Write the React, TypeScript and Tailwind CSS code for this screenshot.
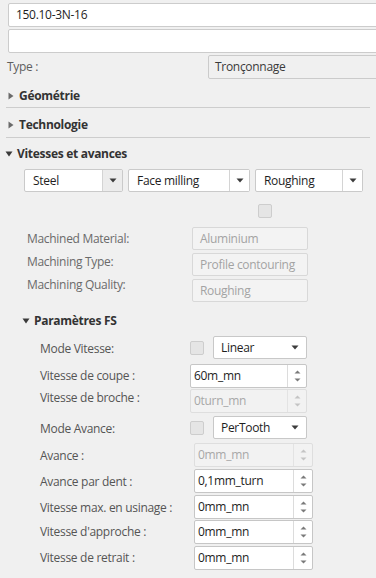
import React from "react";

const Tri = ({ open }: { open?: boolean }) =>
  open ? (
    <svg width="8" height="8" viewBox="0 0 8 8" className="shrink-0">
      <polygon points="0.5,1.5 7.5,1.5 4,6.5" fill="#3a3a3a" />
    </svg>
  ) : (
    <svg width="8" height="8" viewBox="0 0 8 8" className="shrink-0">
      <polygon points="1.5,0.5 6.5,4 1.5,7.5" fill="#6a6a6a" />
    </svg>
  );

const Down = () => (
  <svg width="8" height="5" viewBox="0 0 8 5">
    <polygon points="0.5,0.5 7.5,0.5 4,4.5" fill="#3c3c3c" />
  </svg>
);

const Spin = ({ disabled }: { disabled?: boolean }) => (
  <div className="flex flex-col items-center gap-[4px]">
    <svg width="7" height="4" viewBox="0 0 7 4">
      <polygon points="0.5,3.5 6.5,3.5 3.5,0.5" fill={disabled ? "#c4c4c4" : "#7a7a7a"} />
    </svg>
    <svg width="7" height="4" viewBox="0 0 7 4">
      <polygon points="0.5,0.5 6.5,0.5 3.5,3.5" fill={disabled ? "#c4c4c4" : "#7a7a7a"} />
    </svg>
  </div>
);

const SplitSelect = ({ label, w, grayArrow }: { label: string; w: string; grayArrow?: boolean }) => (
  <div className={`${w} h-[23px] flex border border-[#cacaca] rounded-[2px] bg-white shrink-0`}>
    <div className="flex-1 flex items-center pl-[8px] text-[#1e1e1e]">{label}</div>
    <div
      className={`w-[20px] h-full flex items-center justify-center border-l border-[#d4d4d4] ${
        grayArrow ? "bg-[#ececec]" : "bg-white"
      }`}
    >
      <Down />
    </div>
  </div>
);

const Check = () => (
  <div className="w-[14px] h-[14px] border border-[#cdcdcd] bg-[#e5e5e5] rounded-[2px] shrink-0" />
);

const InlineSelect = ({ label }: { label: string }) => (
  <div className="w-[94px] h-[23px] flex items-center border border-[#c8c8c8] rounded-[2px] bg-white pl-[7px] pr-[7px] justify-between">
    <span className="text-[#1e1e1e]">{label}</span>
    <Down />
  </div>
);

const SpinInput = ({ value, disabled, w, h }: { value: string; disabled?: boolean; w: string; h: string }) => (
  <div
    className={`${w} ${h} flex border rounded-[2px] shrink-0 ${
      disabled ? "border-[#dedede] bg-[#f2f2f2]" : "border-[#c6c6c6] bg-white"
    }`}
  >
    <div className={`flex-1 flex items-center pl-[3px] ${disabled ? "text-[#a8a8a8]" : "text-[#1e1e1e]"}`}>
      {value}
    </div>
    <div className={`w-[19px] h-full flex items-center justify-center border-l ${disabled ? "border-[#e3e3e3]" : "border-[#dcdcdc]"}`}>
      <Spin disabled={disabled} />
    </div>
  </div>
);

const RoField = ({ value }: { value: string }) => (
  <div className="w-[116px] h-[23px] flex items-center border border-[#d8d8d8] rounded-[2px] bg-[#f3f3f3] pl-[7px] text-[#a3a3a3]">
    {value}
  </div>
);

export default function App() {
  return (
    <div
      className="w-[376px] h-[578px] overflow-hidden bg-[#f0f0f0] text-[12px] leading-[16px] tracking-[-0.3px] text-[#5e5e5e]"
      style={{ fontFamily: '"Open Sans", "Noto Sans", sans-serif' }}
    >
      <div className="pl-[7px] pt-[3px]">
        <div className="ml-[1px] w-[380px] h-[24px] flex items-center border border-[#cccccc] rounded-[2px] bg-white pl-[7px] text-[#1e1e1e]">
          150.10-3N-16
        </div>
        <div className="ml-[1px] mt-[2px] w-[380px] h-[24px] border border-[#cccccc] rounded-[2px] bg-white" />
        <div className="mt-[2px] h-[24px] flex items-center">
          <div className="w-[201px] shrink-0">Type :</div>
          <div className="w-[180px] shrink-0 h-[24px] flex items-center border border-[#cbcbcb] rounded-[2px] bg-[#f0f0f0] pl-[6px] text-[#3a3a3a]">
            Tronçonnage
          </div>
        </div>
      </div>

      <div className="h-[29px] mx-[6px] flex items-end pb-[3px] border-b border-[#cdcdcd] gap-[4px] pl-[1px]">
        <div className="h-[16px] flex items-center"><Tri /></div>
        <span className="font-bold text-[#333333]">Géométrie</span>
      </div>
      <div className="h-[30px] mx-[6px] flex items-end pb-[4px] border-b border-[#cdcdcd] gap-[4px] pl-[1px]">
        <div className="h-[16px] flex items-center"><Tri /></div>
        <span className="font-bold text-[#333333]">Technologie</span>
      </div>
      <div className="h-[26px] pt-[8px] pl-[5px] flex items-start gap-[4px]">
        <div className="h-[16px] flex items-center"><Tri open /></div>
        <span className="font-bold text-[#333333]">Vitesses et avances</span>
      </div>

      <div className="mt-[5px] pl-[24px] flex gap-[5px]">
        <SplitSelect label="Steel" w="w-[99px]" grayArrow />
        <SplitSelect label="Face milling" w="w-[122px]" />
        <SplitSelect label="Roughing" w="w-[108px]" />
      </div>

      <div className="mt-[12px] pl-[258px]">
        <Check />
      </div>

      <div className="mt-[9px] flex">
        <div className="w-[192px] shrink-0 pl-[27px] flex flex-col text-[#6a6a6a]">
          <div className="h-[23px] flex items-center">Machined Material:</div>
          <div className="h-[23px] flex items-center">Machining Type:</div>
          <div className="h-[23px] flex items-center">Machining Quality:</div>
        </div>
        <div className="flex flex-col gap-[3px]">
          <RoField value="Aluminium" />
          <RoField value="Profile contouring" />
          <RoField value="Roughing" />
        </div>
      </div>

      <div className="mt-[11px] pl-[22px] flex items-center gap-[4px]">
        <Tri open />
        <span className="font-bold text-[#333333]">Paramètres FS</span>
      </div>

      <div className="pl-[40px] text-[#555555]">
        <div className="mt-[7px] h-[23px] flex items-center">
          <div className="w-[150px] shrink-0 pt-[2px]">Mode Vitesse:</div>
          <Check />
          <div className="ml-[9px]">
            <InlineSelect label="Linear" />
          </div>
        </div>
        <div className="mt-[5px] h-[24px] flex items-center">
          <div className="w-[150px] shrink-0">Vitesse de coupe :</div>
          <SpinInput value="60m_mn" w="w-[117px]" h="h-[24px]" />
        </div>
        <div className="mt-[1px] h-[24px] flex items-center">
          <div className="w-[150px] shrink-0 -mt-[6px]">Vitesse de broche :</div>
          <SpinInput value="0turn_mn" disabled w="w-[117px]" h="h-[24px]" />
        </div>
        <div className="mt-[3px] h-[23px] flex items-center">
          <div className="w-[150px] shrink-0 pt-[2px]">Mode Avance:</div>
          <Check />
          <div className="ml-[9px]">
            <InlineSelect label="PerTooth" />
          </div>
        </div>

        <div className="mt-[4px] h-[24px] flex items-center">
          <div className="w-[154px] shrink-0 pt-[2px]">Avance :</div>
          <SpinInput value="0mm_mn" disabled w="w-[119px]" h="h-[24px]" />
        </div>
        <div className="mt-[2px] h-[24px] flex items-center">
          <div className="w-[154px] shrink-0 pt-[2px]">Avance par dent :</div>
          <SpinInput value="0,1mm_turn" w="w-[119px]" h="h-[24px]" />
        </div>
        <div className="mt-[2px] h-[24px] flex items-center">
          <div className="w-[154px] shrink-0 pt-[2px]">Vitesse max. en usinage :</div>
          <SpinInput value="0mm_mn" w="w-[119px]" h="h-[24px]" />
        </div>
        <div className="mt-[1px] h-[24px] flex items-center">
          <div className="w-[154px] shrink-0">Vitesse d'approche :</div>
          <SpinInput value="0mm_mn" w="w-[119px]" h="h-[24px]" />
        </div>
        <div className="mt-[2px] h-[24px] flex items-center">
          <div className="w-[154px] shrink-0">Vitesse de retrait :</div>
          <SpinInput value="0mm_mn" w="w-[119px]" h="h-[24px]" />
        </div>
      </div>
    </div>
  );
}
